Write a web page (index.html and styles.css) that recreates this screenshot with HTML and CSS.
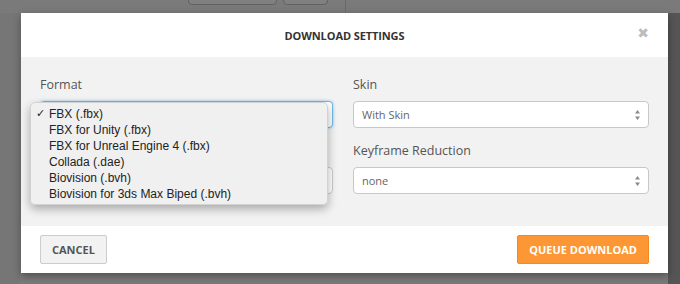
FILE: index.html
```html
<!DOCTYPE html>
<html lang="en">
<head>
  <meta charset="UTF-8">
  <title>Download Settings</title>
  <link rel="stylesheet" href="styles.css">
</head>
<body>
  <!-- Page behind the dialog -->
  <div class="topbar">
    <span class="ghost-btn wide"></span>
    <span class="ghost-btn"></span>
    <span class="divider"></span>
  </div>

  <div class="backdrop">
    <div class="modal">
      <header class="modal-header">
        <h1>Download Settings</h1>
        <span class="close">&#10006;</span>
      </header>

      <main class="modal-body">
        <div class="col">
          <div class="field">
            <label>Format</label>
            <div class="select focused">
              <span class="covered">FBX (.fbx)</span>
              <svg class="arrows" width="5" height="10" viewBox="0 0 5 10"><path d="M2.5 0 5 3.5H0z M2.5 10 0 6.5h5z"/></svg>
            </div>
            <!-- Open native menu -->
            <ul class="menu">
              <li class="checked">FBX (.fbx)</li>
              <li>FBX for Unity (.fbx)</li>
              <li>FBX for Unreal Engine 4 (.fbx)</li>
              <li>Collada (.dae)</li>
              <li>Biovision (.bvh)</li>
              <li>Biovision for 3ds Max Biped (.bvh)</li>
            </ul>
          </div>
          <div class="field">
            <label class="covered">Frames per second</label>
            <div class="select">
              <span class="covered">30</span>
              <svg class="arrows" width="5" height="10" viewBox="0 0 5 10"><path d="M2.5 0 5 3.5H0z M2.5 10 0 6.5h5z"/></svg>
            </div>
          </div>
        </div>

        <div class="col">
          <div class="field">
            <label>Skin</label>
            <div class="select">
              <span>With Skin</span>
              <svg class="arrows" width="5" height="10" viewBox="0 0 5 10"><path d="M2.5 0 5 3.5H0z M2.5 10 0 6.5h5z"/></svg>
            </div>
          </div>
          <div class="field">
            <label>Keyframe Reduction</label>
            <div class="select">
              <span>none</span>
              <svg class="arrows" width="5" height="10" viewBox="0 0 5 10"><path d="M2.5 0 5 3.5H0z M2.5 10 0 6.5h5z"/></svg>
            </div>
          </div>
        </div>
      </main>

      <footer class="modal-footer">
        <button class="btn">Cancel</button>
        <button class="btn primary">Queue Download</button>
      </footer>
    </div>
  </div>
</body>
</html>
```

FILE: styles.css
```css
/* Page behind the dialog */
body {
  margin: 0;
  background: #7a7a7a;
  font-family: "Open Sans", sans-serif;
  overflow: hidden;
}

.topbar {
  height: 13px;
  display: flex;
  padding-left: 188px;
  overflow: hidden;
}

.ghost-btn {
  width: 43px;
  height: 20px;
  margin-top: -17px;
  margin-right: 6px;
  border: 1px solid #616161;
  border-radius: 4px;
  background: #808080;
}

.ghost-btn.wide {
  width: 87px;
}

.divider {
  margin-left: 11px;
  border-left: 1px solid #6a6a6a;
}

.backdrop {
  height: 271px;
  padding-left: 21px;
  background: linear-gradient(to right, #767676 20px, #7a7a7a 20px, #7a7a7a 668px, #555 668px);
}

/* Dialog */
.modal {
  width: 647px;
  background: #fff;
  box-shadow: 0 3px 8px rgba(0, 0, 0, 0.35);
}

.modal-header {
  height: 44px;
  display: flex;
  align-items: center;
  justify-content: center;
  position: relative;
}

.modal-header h1 {
  margin: 0;
  font-size: 11px;
  font-weight: 700;
  text-transform: uppercase;
  color: #333;
  letter-spacing: -0.1px;
}

.close {
  position: absolute;
  right: 19px;
  top: 12px;
  font-family: "DejaVu Sans", sans-serif;
  font-size: 14px;
  color: #bdbdbd;
}

.modal-body {
  background: #f2f2f2;
  padding: 19px 19px 18px;
  display: grid;
  grid-template-columns: 293px 296px;
  column-gap: 20px;
}

.field {
  position: relative;
  margin-bottom: 14px;
}

label {
  display: block;
  font-size: 12.5px;
  line-height: 18px;
  color: #555;
  margin-bottom: 7px;
}

/* text that the open menu hides */
.covered {
  visibility: hidden;
}

.select {
  height: 25px;
  display: flex;
  align-items: center;
  justify-content: space-between;
  padding: 0 8px;
  background: #fff;
  border: 1px solid #c8c8c8;
  border-radius: 4px;
  font-size: 11px;
  color: #666;
}

.select.focused {
  border-color: #6cb8e0;
  box-shadow: 0 0 3px rgba(102, 175, 233, 0.7);
}

.arrows {
  fill: #8a8a8a;
}

/* Native dropdown menu, open */
.menu {
  position: absolute;
  left: -10px;
  top: 26px;
  width: 296px;
  margin: 0;
  padding: 3px 0 2px;
  list-style: none;
  background: rgba(240, 240, 240, 0.98);
  border: 1px solid #d2d2d2;
  border-radius: 5px;
  box-shadow: 0 4px 10px rgba(0, 0, 0, 0.3);
  font-family: "Liberation Sans", Arial, sans-serif;
  font-size: 12px;
  line-height: 16px;
  color: #222;
  z-index: 2;
}

.menu li {
  padding-left: 18px;
  position: relative;
}

.menu li.checked::before {
  content: "\2713";
  position: absolute;
  left: 5px;
  font-family: "DejaVu Sans", sans-serif;
  font-size: 11px;
}

/* Footer */
.modal-footer {
  display: flex;
  justify-content: space-between;
  padding: 9px 19px;
}

.btn {
  height: 29px;
  padding: 0 11px;
  font-family: "Open Sans", sans-serif;
  font-size: 11px;
  font-weight: 700;
  text-transform: uppercase;
  color: #555;
  background: #f2f2f2;
  border: 1px solid #ccc;
  border-radius: 2px;
}

.btn.primary {
  color: #fff;
  background: #fd9735;
  border-color: #f28a24;
}
```
